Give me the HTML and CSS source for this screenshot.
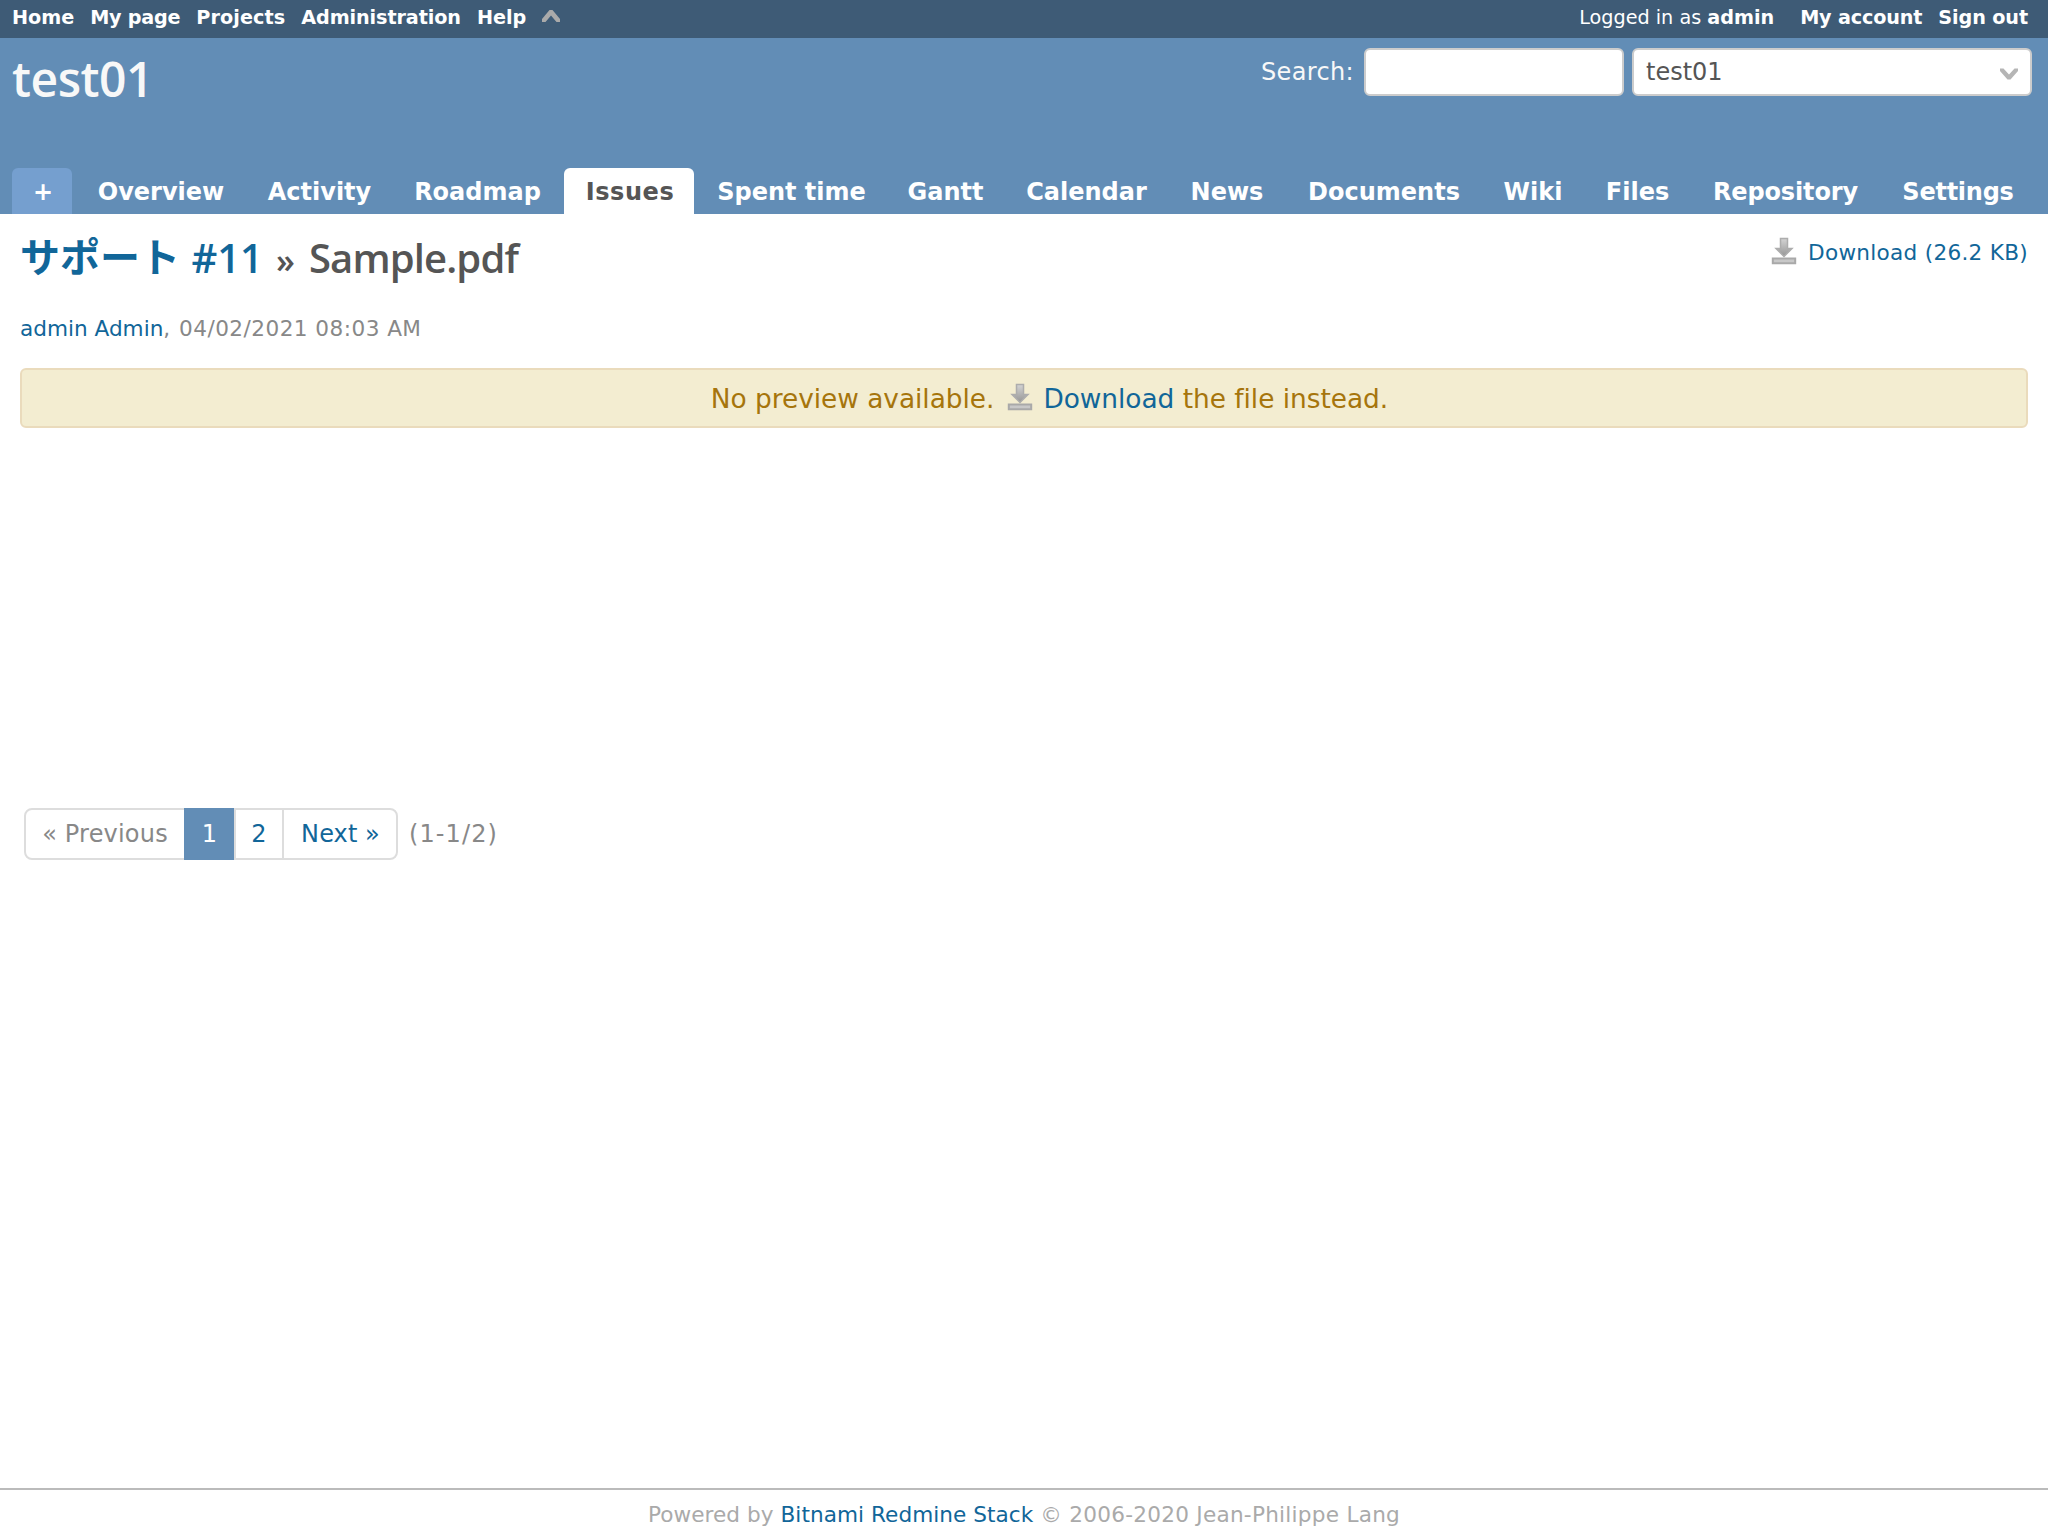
FILE: index.html
```html
<!DOCTYPE html>
<html lang="en">
<head>
<meta charset="utf-8">
<title>Sample.pdf - test01 - Redmine</title>
<link rel="stylesheet" href="styles.css">
</head>
<body>
<svg class="defs" width="0" height="0">
  <defs>
    <linearGradient id="shade" x1="0" y1="0" x2="0" y2="1"><stop offset="0" stop-color="#d4d4d4"/><stop offset="1" stop-color="#959595"/></linearGradient>
    <symbol id="download" viewBox="0 0 26 28">
      <path d="M9.500 1.500h7v10h4.500L13 19.500 5 11.500h4.500z" fill="url(#shade)" stroke="#adadad" stroke-width="1.500"/>
      <path d="M1.800 21.500h22.400v4.700H1.800z" fill="#c8c8c8" stroke="#a9a9a9" stroke-width="2"/>
    </symbol>
  </defs>
</svg>
<nav class="top-menu">
  <ul class="menu">
    <li><a>Home</a></li><li><a class="t-page">My page</a></li><li><a class="t-projects">Projects</a></li><li><a class="t-admin">Administration</a></li><li><a>Help</a></li>
    <li class="collapse"><svg width="20" height="14" viewBox="0 0 20 14"><path d="M1 13V10L8.500 1h3L19 10v3h-3.500L10 6.500 4.500 13z" fill="#aaa"/></svg></li>
  </ul>
  <div class="account"><span class="logged">Logged in as <b>admin</b></span><a class="t-account">My account</a><a class="t-out">Sign out</a></div>
</nav>
<header class="header">
  <div class="header-row">
    <h1>test01</h1>
    <div class="search"><label>Search:</label><input type="text"><div class="select"><span>test01</span><svg width="20" height="14" viewBox="0 0 20 14"><path d="M1 1.500h3.500L10 7.500l5.500-6h3.500v2.500l-7.500 8.500h-3L1 4z" fill="#b5b5b5"/></svg></div></div>
  </div>
  <nav class="tabs">
    <a class="tab new">+</a><a class="tab overview">Overview</a><a class="tab activity">Activity</a><a class="tab roadmap">Roadmap</a><a class="tab issues selected">Issues</a><a class="tab spent">Spent time</a><a class="tab gantt">Gantt</a><a class="tab calendar">Calendar</a><a class="tab news">News</a><a class="tab documents">Documents</a><a class="tab wiki">Wiki</a><a class="tab files">Files</a><a class="tab repository">Repository</a><a class="tab settings">Settings</a>
  </nav>
</header>
<main class="content">
  <div class="title-row">
    <h2><a class="ja">サポート</a><a> #11</a><span class="sep">»</span><span class="file">Sample.pdf</span></h2>
    <a class="contextual"><svg class="icon" width="26" height="28"><use href="#download"/></svg><span>Download (26.2 KB)</span></a>
  </div>
  <p class="author"><a>admin Admin</a>, <span class="date">04/02/2021 08:03 AM</span></p>
  <p class="nodata"><span>No preview available.</span><svg class="icon" width="26" height="28"><use href="#download"/></svg><span><a>Download</a> the file instead.</span></p>
  <div class="pagination">
    <ul class="pages"><li class="previous">« Previous</li><li class="current">1</li><li class="page"><a>2</a></li><li class="next"><a>Next »</a></li></ul>
    <span class="items">(1-1/2)</span>
  </div>
</main>
<footer class="footer">Powered by <a>Bitnami Redmine Stack</a> <span class="copyright">© 2006-2020 Jean-Philippe Lang</span></footer>
</body>
</html>
```
FILE: styles.css
```css
* { box-sizing: border-box; }
body { margin: 0; height: 1536px; display: flex; flex-direction: column; background: #fff; color: #555; font-family: Verdana, "DejaVu Sans", sans-serif; font-size: 24px; font-variant-ligatures: none; white-space: nowrap; overflow: hidden; }
a { color: #169; text-decoration: none; }
ul { list-style: none; margin: 0; padding: 0; }
svg { display: block; flex: none; }
.defs { position: absolute; }

.top-menu { height: 38px; background: #3e5b76; color: #fff; display: flex; justify-content: space-between; padding: 0 20px 0 12px; font-size: 19.2px; line-height: 36px; }
.top-menu a { color: #fff; font-weight: bold; }
.menu { display: flex; gap: 16px; }
.t-page { letter-spacing: -.25px; }
.t-projects { letter-spacing: .1px; }
.t-admin { letter-spacing: -.1px; }
.t-account { letter-spacing: -.15px; }
.t-out { letter-spacing: -.1px; }
.collapse { padding-top: 9px; margin-left: -1px; }
.account { display: flex; gap: 16px; }
.logged { margin-right: 10px; }

.header { height: 176px; background: #628db6; display: flex; flex-direction: column; justify-content: space-between; }
.header-row { display: flex; justify-content: space-between; padding: 10px 16px 0 12px; }
h1 { margin: 0; font: 600 48px/62px "Trebuchet MS", "Open Sans", sans-serif; letter-spacing: -.5px; color: #f8f8f8; }
.search { display: flex; height: 48px; line-height: 48px; color: #f8f8f8; }
.search label { margin-right: 10px; letter-spacing: .35px; }
.search input { width: 260px; height: 48px; border: 2px solid #ccc; border-radius: 6px; background: #fff; margin: 0 8px 0 0; }
.select { width: 400px; border: 2px solid #ccc; border-radius: 6px; background: #fff; color: #555; display: flex; justify-content: space-between; padding: 0 11px 0 12px; line-height: 44px; }
.select svg { margin-top: 17px; }
.tabs { display: flex; gap: 4px; padding-left: 12px; }
.tab { height: 46px; line-height: 48px; padding-left: 2px; text-align: center; border-radius: 6px 6px 0 0; color: #fff; font-weight: bold; }
.new { width: 60px; background: #759fcf; }
.overview { width: 168px; }
.activity { width: 141px; }
.roadmap { width: 167px; }
.issues { width: 130px; letter-spacing: .6px; }
.spent { width: 185px; }
.gantt { width: 115px; }
.calendar { width: 159px; }
.news { width: 114px; }
.documents { width: 192px; }
.wiki { width: 98px; }
.files { width: 103px; }
.repository { width: 185px; letter-spacing: -.12px; }
.settings { width: 152px; letter-spacing: -.25px; }
.selected { background: #fff; color: #555; }

.content { flex: 1; padding: 0 20px; }
.title-row { display: flex; justify-content: space-between; height: 88px; }
h2 { margin: 0; padding-top: 15px; font: 600 40px/58px "Trebuchet MS", "Open Sans", "Noto Sans CJK JP", sans-serif; white-space: pre; display: flex; }
.ja { font-weight: 700; margin: -1px 1px 0 0; }
.sep { font-size: 34px; margin: 2px 14px 0 13px; }
.file { letter-spacing: -.85px; }
.contextual { display: flex; gap: 11px; padding-top: 23px; font-size: 21.6px; line-height: 32px; letter-spacing: .28px; }
.author { margin: 0; padding-top: 12px; height: 66px; font-size: 21.6px; line-height: 30px; color: #888; }
.date { margin-left: 2px; letter-spacing: .45px; }
.nodata { margin: 0; height: 60px; display: flex; justify-content: center; padding-left: 51px; background: #f3edd1; border: 2px solid #eadbbc; border-radius: 6px; color: #a6750c; font-size: 26.4px; line-height: 57px; letter-spacing: -.03px; }
.nodata .icon { margin: 13px 10px 0 13px; }
.pagination { display: flex; margin: 380px 0 0 4px; line-height: 48px; color: #888; }
.pages { display: flex; width: 374px; height: 52px; border: 2px solid #ddd; border-radius: 8px; }
.pages li { text-align: center; }
.previous { width: 158px; letter-spacing: .2px; }
.current { width: 50px; height: 52px; margin-top: -2px; padding-left: 1px; line-height: 52px; background: #628db6; color: #fff; }
.page { width: 50px; border-left: 2px solid #ddd; border-right: 2px solid #ddd; }
.next { flex: 1; letter-spacing: .1px; padding-left: 1px; }
.items { margin-left: 11px; line-height: 52px; letter-spacing: 1.1px; }

.footer { height: 48px; border-top: 2px solid #bbb; text-align: center; color: #aaa; font-size: 21.6px; line-height: 50px; letter-spacing: .05px; }
.copyright { letter-spacing: .25px; }
```
